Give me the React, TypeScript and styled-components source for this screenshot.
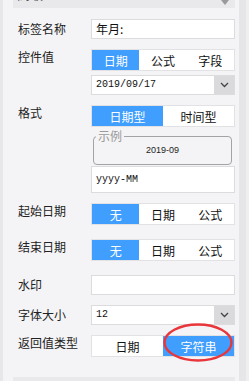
import React from "react";
import styled, { createGlobalStyle } from "styled-components";

const GlobalStyle = createGlobalStyle`
  html, body {
    margin: 0;
    padding: 0;
    background: #f4f4f6;
  }
  body {
    font-family: "Noto Sans CJK SC", "Liberation Sans", sans-serif;
    font-size: 12px;
    color: #222;
  }
`;

const BLUE = "#409eff";

const App = () => {
  return (
    <>
      <GlobalStyle />
      <Page>
        <EdgeLeft />
        <Panel>
          <SectionHead $mt={-22}>
            <span>高级</span>
            <Caret />
          </SectionHead>

          <Row $mt={11}>
            <Label $center>标签名称</Label>
            <Field>
              <TextInput>年月:</TextInput>
            </Field>
          </Row>

          <Row $mt={10}>
            <Label>控件值</Label>
            <Field>
              <Segmented $cols={3}>
                <Segment $active>日期</Segment>
                <Segment>公式</Segment>
                <Segment>字段</Segment>
              </Segmented>
              <Select $mt={4}>
                <SelectValue>2019/09/17</SelectValue>
                <SelectArrow>
                  <Chevron />
                </SelectArrow>
              </Select>
            </Field>
          </Row>

          <Row $mt={10}>
            <Label>格式</Label>
            <Field>
              <Segmented $cols={2}>
                <Segment $active>日期型</Segment>
                <Segment>时间型</Segment>
              </Segmented>
              <Example>
                <ExampleLegend>示例</ExampleLegend>
                <ExampleValue>2019-09</ExampleValue>
              </Example>
              <PatternInput>yyyy-MM</PatternInput>
            </Field>
          </Row>

          <Row $mt={10}>
            <Label>起始日期</Label>
            <Field>
              <Segmented $cols={3}>
                <Segment $active>无</Segment>
                <Segment>日期</Segment>
                <Segment>公式</Segment>
              </Segmented>
            </Field>
          </Row>

          <Row $mt={14}>
            <Label>结束日期</Label>
            <Field>
              <Segmented $cols={3}>
                <Segment $active>无</Segment>
                <Segment>日期</Segment>
                <Segment>公式</Segment>
              </Segmented>
            </Field>
          </Row>

          <Row $mt={14}>
            <Label $center>水印</Label>
            <Field>
              <TextInput />
            </Field>
          </Row>

          <Row $mt={10}>
            <Label $center>字体大小</Label>
            <Field>
              <Select>
                <SelectValue>12</SelectValue>
                <SelectArrow>
                  <Chevron />
                </SelectArrow>
              </Select>
            </Field>
          </Row>

          <Row $mt={10}>
            <Label>返回值类型</Label>
            <Field>
              <Marked>
                <Segmented $cols={2}>
                  <Segment>日期</Segment>
                  <Segment $active>字符串</Segment>
                </Segmented>
                <RedRing viewBox="0 0 70 39">
                  <ellipse
                    cx="35"
                    cy="19.5"
                    rx="33.5"
                    ry="18"
                    fill="none"
                    stroke="#e8363b"
                    strokeWidth="2.4"
                  />
                </RedRing>
              </Marked>
            </Field>
          </Row>

          <SectionHead $mt={20} />
        </Panel>
        <ScrollGap />
        <ScrollTrack />
        <ScrollEdge />
      </Page>
    </>
  );
};

export default App;

const Caret = () => (
  <CaretSvg viewBox="0 0 8 5">
    <path d="M0 0 L8 0 L4 5 Z" fill="#9a9a9a" />
  </CaretSvg>
);

const Chevron = () => (
  <svg width="9" height="6" viewBox="0 0 9 6">
    <path d="M1 1 L4.5 4.5 L8 1" fill="none" stroke="#444" strokeWidth="1.3" />
  </svg>
);

const Page = styled.div`
  display: flex;
  width: 249px;
  height: 381px;
  overflow: hidden;
  background: #f4f4f6;
`;

const EdgeLeft = styled.div`
  width: 3px;
  flex-shrink: 0;
  background: #e7e7e9;
`;

const Panel = styled.div`
  width: 222px;
  flex-shrink: 0;
  padding-left: 10px;
  display: flex;
  flex-direction: column;
`;

const ScrollGap = styled.div`
  width: 4px;
  flex-shrink: 0;
  background: #f4f4f6;
`;

const ScrollTrack = styled.div`
  width: 7px;
  flex-shrink: 0;
  background: #e6e6e8;
`;

const ScrollEdge = styled.div`
  flex: 1;
  background: #efeff1;
`;

const SectionHead = styled.div<{ $mt: number }>`
  flex-shrink: 0;
  height: 30px;
  margin-top: ${(p) => p.$mt}px;
  background: #e9e9eb;
  display: flex;
  align-items: center;
  justify-content: space-between;
  padding: 0 6px 0 4px;
  box-sizing: border-box;
  font-size: 13px;
  color: #333;
`;

const CaretSvg = styled.svg`
  width: 8px;
  height: 5px;
  margin-top: 18px;
`;

const Row = styled.div<{ $mt: number }>`
  display: grid;
  grid-template-columns: 78px 144px;
  margin-top: ${(p) => p.$mt}px;
  flex-shrink: 0;
`;

const Label = styled.div<{ $center?: boolean }>`
  padding-left: 5px;
  font-size: 12px;
  line-height: ${(p) => (p.$center ? "20px" : "16px")};
  color: #222;
  white-space: nowrap;
  align-self: start;
`;

const Field = styled.div`
  display: flex;
  flex-direction: column;
`;

const TextInput = styled.div`
  height: 20px;
  box-sizing: border-box;
  border: 1px solid #dcdcde;
  background: #fff;
  padding-left: 4px;
  font-size: 12px;
  line-height: 18px;
  color: #111;
`;

const Segmented = styled.div<{ $cols: number }>`
  display: grid;
  grid-template-columns: repeat(${(p) => p.$cols}, 1fr);
  height: 22px;
  box-sizing: border-box;
  border: 1px solid #e2e2e4;
  background: #fff;
`;

const Segment = styled.div<{ $active?: boolean }>`
  display: flex;
  align-items: center;
  justify-content: center;
  font-size: 12px;
  background: ${(p) => (p.$active ? BLUE : "#fff")};
  color: ${(p) => (p.$active ? "#fff" : "#111")};
`;

const Select = styled.div<{ $mt?: number }>`
  display: flex;
  height: 20px;
  margin-top: ${(p) => p.$mt ?? 0}px;
  box-sizing: border-box;
  border: 1px solid #dcdcde;
  background: #fff;
`;

const SelectValue = styled.div`
  flex: 1;
  padding-left: 4px;
  font-family: "Liberation Mono", monospace;
  font-size: 10px;
  line-height: 18px;
  color: #111;
`;

const SelectArrow = styled.div`
  width: 20px;
  display: flex;
  align-items: center;
  justify-content: center;
  background: #dadadc;
`;

const Example = styled.fieldset`
  margin: 3px 3px 0 2px;
  padding: 0 0 6px;
  border: 1px solid #a3a3a5;
  border-radius: 4px;
  min-width: 0;
  display: flex;
  justify-content: center;
`;

const ExampleLegend = styled.legend`
  margin-left: 2px;
  padding: 0 2px;
  font-size: 12px;
  line-height: 12px;
  color: #999;
`;

const ExampleValue = styled.div`
  width: 100%;
  text-align: center;
  font-family: "Liberation Sans", sans-serif;
  font-size: 9px;
  line-height: 16px;
  color: #222;
`;

const PatternInput = styled.div`
  height: 27px;
  margin-top: 1px;
  box-sizing: border-box;
  border: 1px solid #dcdcde;
  background: #fff;
  padding-left: 4px;
  font-family: "Liberation Mono", monospace;
  font-size: 10px;
  line-height: 25px;
  color: #111;
`;

const Marked = styled.div`
  position: relative;
`;

const RedRing = styled.svg`
  position: absolute;
  left: 72px;
  top: -12px;
  width: 70px;
  height: 39px;
  overflow: visible;
`;
